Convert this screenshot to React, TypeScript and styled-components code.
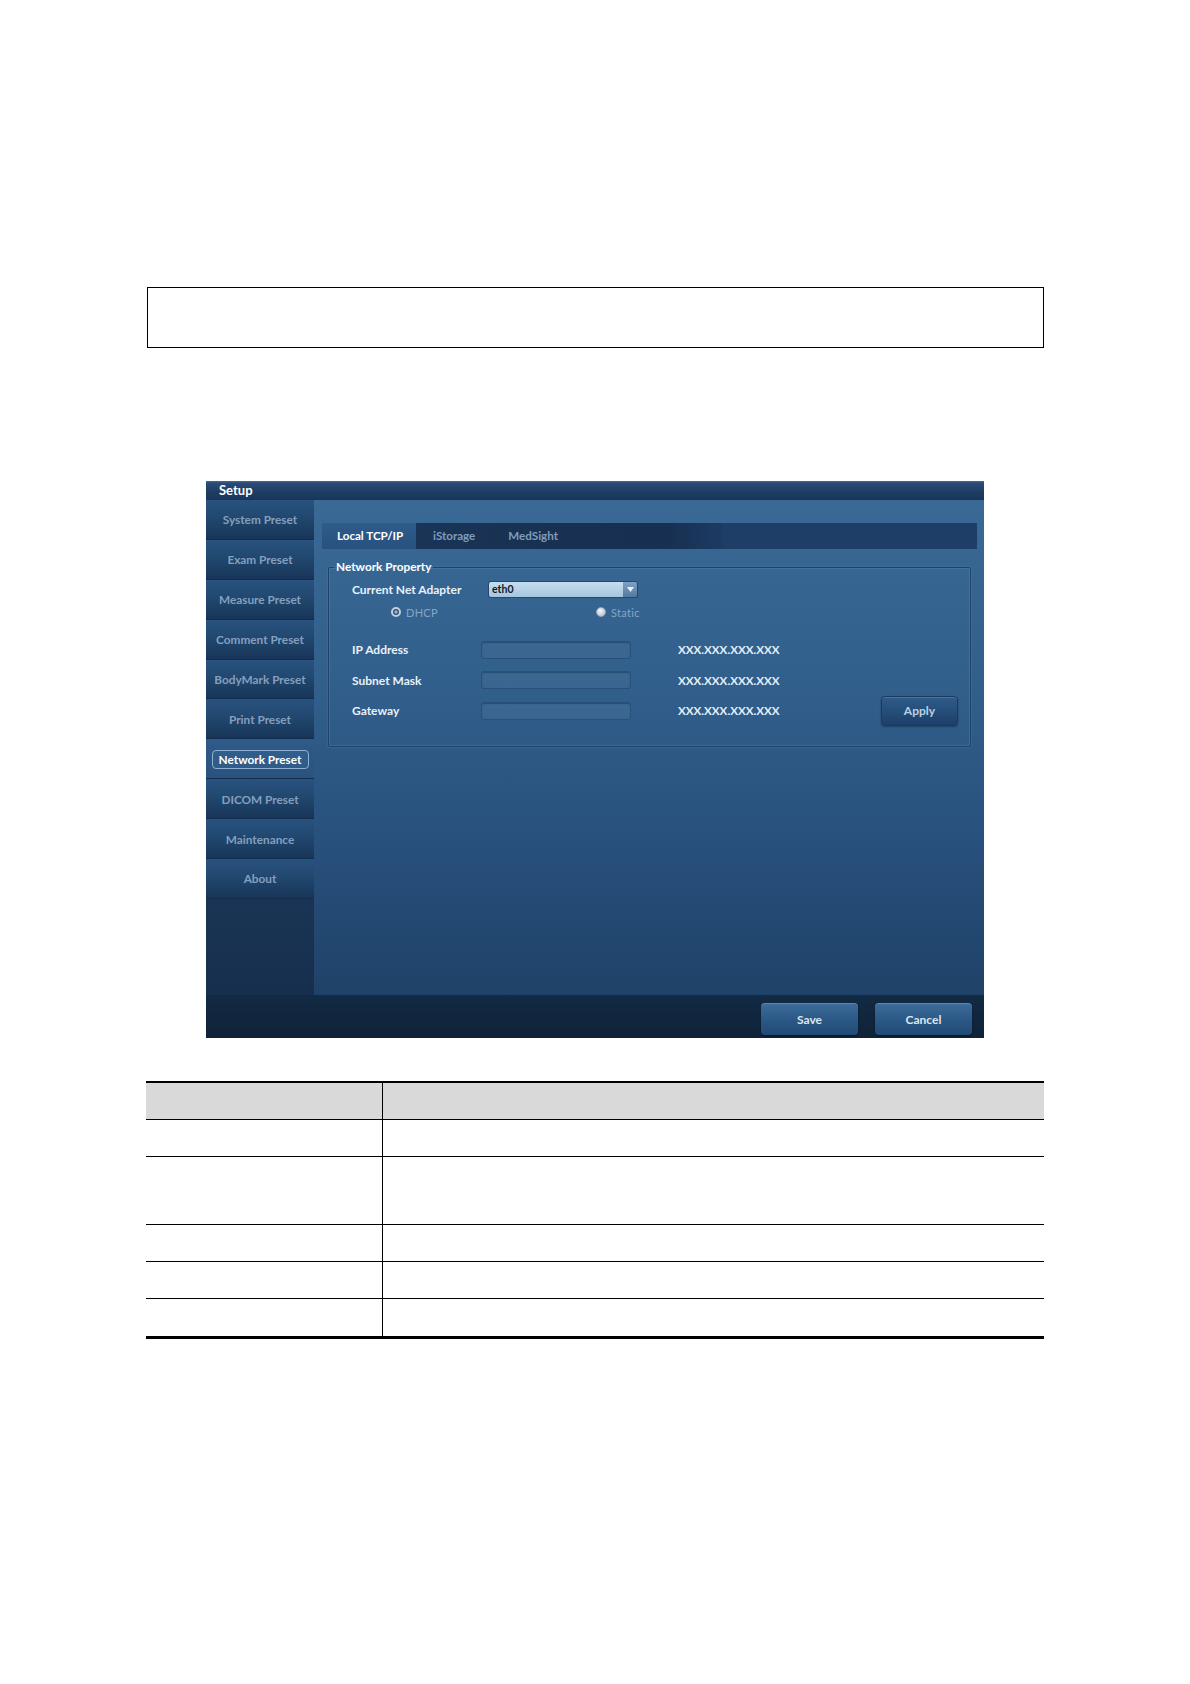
import React from "react";
import styled, { createGlobalStyle } from "styled-components";

const GlobalStyle = createGlobalStyle`
  body {
    margin: 0;
    background: #ffffff;
    font-family: Lato, "Liberation Sans", sans-serif;
  }
`;

const navItems = [
    "System Preset",
    "Exam Preset",
    "Measure Preset",
    "Comment Preset",
    "BodyMark Preset",
    "Print Preset",
    "Network Preset",
    "DICOM Preset",
    "Maintenance",
    "About",
];

const tabs = ["Local TCP/IP", "iStorage", "MedSight"];

const addressRows = ["IP Address", "Subnet Mask", "Gateway"];

// header + body rows of the parameter table
const tableRows = [36, 36, 67, 36, 36, 37];

export default function App() {
    return (
        <>
            <GlobalStyle />
            <Page>
                <NoteBox />
                <Screen>
                    <TitleBar>Setup</TitleBar>
                    <Main>
                        <Sidebar>
                            {navItems.map((item) => (
                                <NavItem key={item} $active={item === "Network Preset"}>
                                    {item === "Network Preset" ? <ActiveLabel>{item}</ActiveLabel> : item}
                                </NavItem>
                            ))}
                        </Sidebar>
                        <Content>
                            <TabBar>
                                <TabStrip>
                                    {tabs.map((tab, i) => (
                                        <Tab key={tab} $active={i === 0}>{tab}</Tab>
                                    ))}
                                </TabStrip>
                            </TabBar>
                            <Group>
                                <Legend>Network Property</Legend>
                                <GroupBody>
                                    <AdapterRow>
                                        <Label $w={137}>Current Net Adapter</Label>
                                        <Combo>
                                            <ComboText>eth0</ComboText>
                                            <ComboArrow>
                                                <svg width="7" height="5" viewBox="0 0 7 5">
                                                    <path d="M0 0 H7 L3.5 5 Z" fill="#e9f1f8" />
                                                </svg>
                                            </ComboArrow>
                                        </Combo>
                                    </AdapterRow>
                                    <RadioRow>
                                        <RadioOption $w={205}>
                                            <RadioDot $checked />
                                            DHCP
                                        </RadioOption>
                                        <RadioOption>
                                            <RadioDot />
                                            Static
                                        </RadioOption>
                                    </RadioRow>
                                    <AddressList>
                                        {addressRows.map((row, i) => (
                                            <AddressRow key={row}>
                                                <Label $w={129}>{row}</Label>
                                                <Field />
                                                <Value>XXX.XXX.XXX.XXX</Value>
                                                {i === addressRows.length - 1 && <ApplyButton>Apply</ApplyButton>}
                                            </AddressRow>
                                        ))}
                                    </AddressList>
                                </GroupBody>
                            </Group>
                        </Content>
                    </Main>
                    <Footer>
                        <FooterButton>Save</FooterButton>
                        <FooterButton>Cancel</FooterButton>
                    </Footer>
                </Screen>
                <Table>
                    <colgroup>
                        <col style={{ width: 236 }} />
                        <col />
                    </colgroup>
                    <tbody>
                        {tableRows.map((h, i) => (
                            <Row key={i} $header={i === 0}>
                                <Cell style={{ height: h }} />
                                <Cell />
                            </Row>
                        ))}
                    </tbody>
                </Table>
            </Page>
        </>
    );
}

const Page = styled.div`
    width: 1190px;
    min-height: 1684px;
    box-sizing: border-box;
    padding-top: 287px;
    display: flex;
    flex-direction: column;
    align-items: center;
`;

const NoteBox = styled.div`
    width: 897px;
    height: 61px;
    box-sizing: border-box;
    border: 1px solid #000;
    margin-left: 1px;
`;

const Screen = styled.div`
    margin-top: 133px;
    width: 778px;
    height: 557px;
    display: flex;
    flex-direction: column;
    background: #10233a;
    color: #e9f0f7;
`;

const TitleBar = styled.div`
    height: 19px;
    padding-left: 13px;
    line-height: 19px;
    font-size: 13px;
    font-weight: 700;
    color: #ffffff;
    background: linear-gradient(180deg, #4a6c9e 0, #2b4b77 2px, #1e3c62 60%, #1a3559 100%);
`;

const Main = styled.div`
    flex: 1;
    display: flex;
    min-height: 0;
`;

const Sidebar = styled.div`
    width: 108px;
    display: flex;
    flex-direction: column;
    background: linear-gradient(180deg, #1c3a60 0%, #1b3759 70%, #172f4e 100%);
`;

const NavItem = styled.div<{ $active?: boolean }>`
    height: 39.9px;
    flex: none;
    box-sizing: border-box;
    display: flex;
    align-items: center;
    justify-content: center;
    padding-top: 1px;
    font-size: 11.8px;
    font-weight: 700;
    white-space: nowrap;
    color: ${(p) => (p.$active ? "#ffffff" : "#859fbf")};
    background: ${(p) =>
        p.$active
            ? "linear-gradient(180deg, #2f5a89 0%, #29527f 100%)"
            : "linear-gradient(180deg, #28527f 0%, #21486f 45%, #183558 100%)"};
    border-bottom: 1px solid #142d4c;
`;

const ActiveLabel = styled.span`
    width: 97px;
    height: 19px;
    box-sizing: border-box;
    display: flex;
    align-items: center;
    justify-content: center;
    border: 1px solid #8fb0d1;
    border-radius: 4px;
    background: rgba(60, 105, 150, 0.35);
`;

const Content = styled.div`
    flex: 1;
    padding: 23px 7px 0 8px;
    background: linear-gradient(180deg, #3a6995 0%, #32608d 35%, #28507c 70%, #1f4268 100%);
`;

const TabBar = styled.div`
    height: 26px;
    display: flex;
    background: #1e3e67;
`;

const TabStrip = styled.div`
    width: 401px;
    display: flex;
    background: linear-gradient(90deg, #1b3659 0%, #172f50 85%, #1d3b63 100%);
`;

const Tab = styled.div<{ $active?: boolean }>`
    padding: ${(p) => (p.$active ? "0 0 0 15px" : "0 16px 0 17px")};
    width: ${(p) => (p.$active ? "94px" : "auto")};
    box-sizing: border-box;
    line-height: 26px;
    font-size: 11.6px;
    font-weight: 700;
    white-space: nowrap;
    color: ${(p) => (p.$active ? "#ffffff" : "#7f9cbd")};
    background: ${(p) => (p.$active ? "linear-gradient(180deg, #2f5c8b, #27517f)" : "transparent")};
`;

const Group = styled.fieldset`
    margin: 11px 6px 0;
    padding: 0;
    min-width: 0;
    border: 1px solid #1f426b;
    border-radius: 2px;
    box-shadow: inset 0 0 0 1px rgba(110, 150, 195, 0.25), 0 0 0 1px rgba(110, 150, 195, 0.15);
`;

const Legend = styled.legend`
    margin-left: 5px;
    padding: 0 2px;
    line-height: 14px;
    font-size: 11.8px;
    font-weight: 700;
    color: #ffffff;
`;

const GroupBody = styled.div`
    padding: 7px 12px 20px 23px;
    display: flex;
    flex-direction: column;
`;

const AdapterRow = styled.div`
    height: 16px;
    display: flex;
    align-items: center;
`;

const Label = styled.div<{ $w: number }>`
    width: ${(p) => p.$w}px;
    flex: none;
    font-size: 12px;
    font-weight: 700;
    white-space: nowrap;
    color: #eaf1f8;
`;

const Combo = styled.div`
    width: 148px;
    height: 15px;
    display: flex;
    border-radius: 2px;
    overflow: hidden;
    box-shadow: 0 0 0 1px rgba(20, 45, 75, 0.5);
`;

const ComboText = styled.div`
    flex: 1;
    padding-left: 3px;
    line-height: 15px;
    font-size: 10.5px;
    font-weight: 700;
    color: #0c1b2c;
    background: linear-gradient(180deg, #c6deef 0%, #a5c5de 100%);
`;

const ComboArrow = styled.div`
    width: 14px;
    display: flex;
    align-items: center;
    justify-content: center;
    background: linear-gradient(180deg, #7fa2c4 0%, #52799f 100%);
`;

const RadioRow = styled.div`
    height: 12px;
    margin-top: 9px;
    padding-left: 39px;
    display: flex;
    align-items: center;
`;

const RadioOption = styled.div<{ $w?: number }>`
    width: ${(p) => (p.$w ? `${p.$w}px` : "auto")};
    flex: none;
    display: flex;
    align-items: center;
    gap: 5px;
    font-size: 11px;
    color: #86a6c7;
    letter-spacing: 0.3px;
`;

const RadioDot = styled.span<{ $checked?: boolean }>`
    width: 10px;
    height: 10px;
    box-sizing: border-box;
    border-radius: 50%;
    border: ${(p) => (p.$checked ? "2px solid #c3ced9" : "1px solid #9aa9b8")};
    background: ${(p) =>
        p.$checked
            ? "radial-gradient(circle, #a6b6c6 0 1px, #2d5680 2px)"
            : "radial-gradient(circle at 40% 35%, #f3f6f9, #aab7c5)"};
`;

const AddressList = styled.div`
    margin-top: 16px;
    display: flex;
    flex-direction: column;
`;

const AddressRow = styled.div`
    height: 31px;
    display: flex;
    align-items: center;
    &:nth-child(2) {
        height: 30px;
    }
`;

const Field = styled.div`
    width: 150px;
    height: 18px;
    box-sizing: border-box;
    border: 1px solid #27507a;
    border-radius: 3px;
    background: linear-gradient(180deg, #3b6792 0%, #3a6590 100%);
    box-shadow: inset 0 1px 1px rgba(10, 30, 55, 0.35);
`;

const Value = styled.div`
    margin-left: 47px;
    font-size: 11.6px;
    font-weight: 700;
    color: #e4eef8;
`;

const ApplyButton = styled.div`
    margin-left: auto;
    width: 77px;
    height: 30px;
    box-sizing: border-box;
    display: flex;
    align-items: center;
    justify-content: center;
    border: 1px solid #1a3a60;
    border-radius: 4px;
    background: linear-gradient(180deg, #2f5c8a 0%, #244d78 55%, #1c3f67 100%);
    box-shadow: inset 0 1px 0 rgba(255, 255, 255, 0.15), 0 1px 2px rgba(0, 0, 0, 0.3);
    font-size: 12px;
    font-weight: 700;
    color: #bcd0e3;
`;

const Footer = styled.div`
    height: 43px;
    box-sizing: border-box;
    padding: 8px 12px 0;
    display: flex;
    justify-content: flex-end;
    align-items: flex-start;
    gap: 17px;
    background: linear-gradient(180deg, #132a44 0%, #0f2238 100%);
`;

const FooterButton = styled.div`
    width: 97px;
    height: 32px;
    display: flex;
    align-items: center;
    justify-content: center;
    border-radius: 4px;
    background: linear-gradient(180deg, #3d6d9c 0%, #2c5986 50%, #224a76 100%);
    box-shadow: inset 0 1px 0 rgba(255, 255, 255, 0.18), 0 1px 2px rgba(0, 0, 0, 0.4);
    font-size: 12px;
    font-weight: 700;
    color: #dce7f2;
`;

const Table = styled.table`
    margin-top: 43px;
    width: 898px;
    border-collapse: collapse;
    table-layout: fixed;
    border-top: 2px solid #000;
    border-bottom: 3px solid #000;
`;

const Row = styled.tr<{ $header?: boolean }>`
    background: ${(p) => (p.$header ? "#d9d9d9" : "transparent")};
    border-bottom: 1px solid #000;
`;

const Cell = styled.td`
    padding: 0;
    &:first-child {
        border-right: 1px solid #000;
    }
`;
